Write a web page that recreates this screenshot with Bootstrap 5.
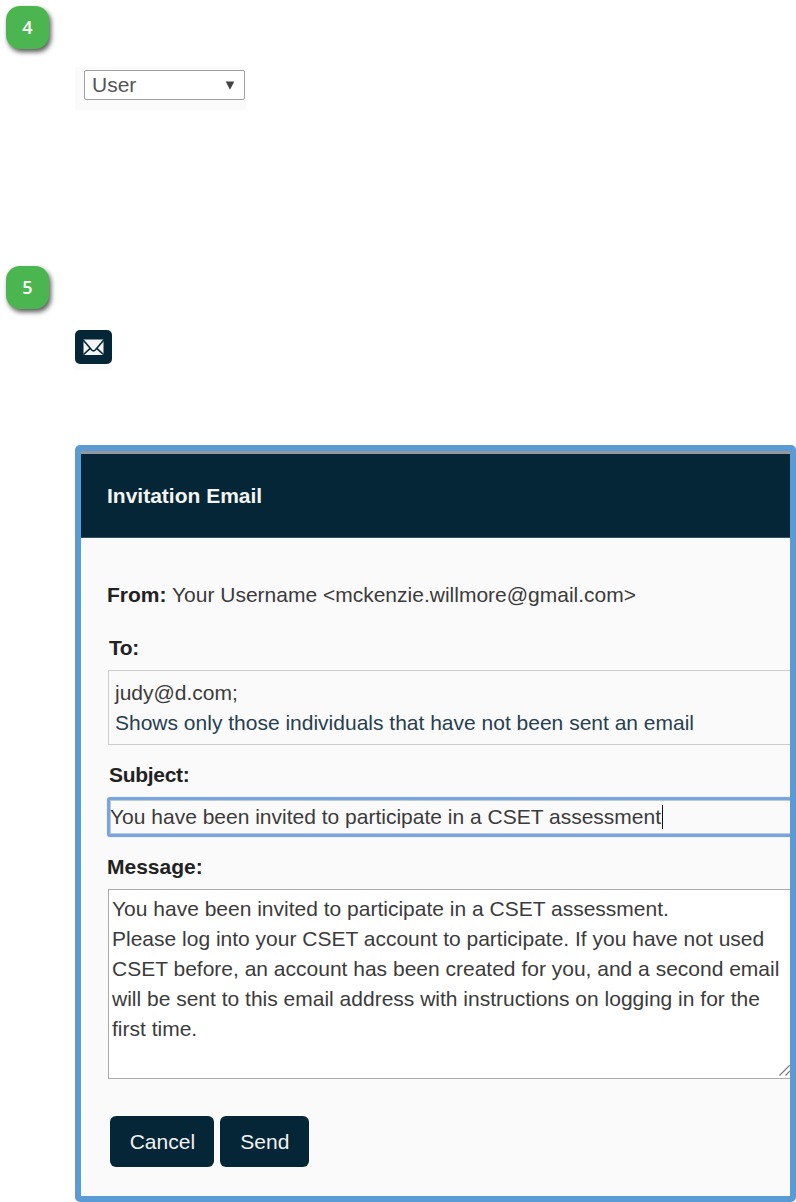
<!DOCTYPE html>
<html lang="en">
<head>
<meta charset="utf-8">
<meta name="viewport" content="width=device-width, initial-scale=1">
<title>Invitation Email</title>
<link href="https://cdn.jsdelivr.net/npm/bootstrap@5.3.0/dist/css/bootstrap.min.css" rel="stylesheet">
<style>
body{font-family:"Liberation Sans",Arial,sans-serif;font-size:21px;line-height:30px;color:#3b3b3b;background:#fff;height:1202px;overflow:hidden}
.step{width:43px;height:43px;margin-left:6px;border-radius:14px;background:#4bb64f;color:#fff;font:600 18px/43px "Open Sans",sans-serif;box-shadow:2px 3px 5px rgba(0,0,0,.65)}
.indent{margin-left:75px}
.role-wrap{width:171px;height:43px;margin-top:18px;padding:3px 1px 0 9px;background:#fafafa}
.role{height:30px;border:1px solid #a0a0a0;border-radius:2px;background:#fff;padding:0 9px 0 7px;color:#555}
.mail-wrap{width:37px;height:40px;margin-top:21px;background:#fafafa}
.mail{width:37px;height:34px;background:#052636;border:0;border-radius:5px}
.panel{width:721px;height:757px;margin-top:75px;border:6px solid #5b9bd5;border-radius:5px;background:#fafafa;overflow:hidden}
.panel-head{height:87px;border-top:3px solid #96979a;border-bottom:1px solid #375160;background:#052636;color:#f4f4f4;padding:27px 0 0 26px}
.panel-main{padding:42px 0 0 26px}
b{color:#222}
.to-box{height:75px;margin:7px 0 15px 1px;border:1px solid #ccc;border-right:0;padding:7px 6px}
.subject-box{height:40px;margin:7px -4px 15px 0;border:3px solid #78a5df;border-radius:3px;box-shadow:inset 0 0 0 1px #bccbd0,0 0 1px #9bc0ff;padding:2px 0 0 0}
.caret{width:1px;height:24px;background:#111;margin:3px 0 0 1px}
.message-box{height:190px;margin:7px 0 0 1px;border:1px solid #aaa;border-right:0;background:#fff;padding:4px 3px;position:relative}
.grip{position:absolute;right:0;bottom:2px}
.line{display:block;white-space:nowrap}
.act{height:51px;background:#052636;color:#f2f2f2;border:0;border-radius:6px;font-size:21px;line-height:30px;padding:0}
.act:hover{background:#0b3950;color:#fff}
</style>
</head>
<body>
<div style="height:6px"></div>
<div class="step text-center">4</div>
<div class="indent role-wrap"><div class="role d-flex align-items-center justify-content-between"><span>User</span><svg width="10" height="9" viewBox="0 0 10 9"><path d="M.7.500h8.600L5 8.800z" fill="#444"/></svg></div></div>
<div style="height:156px"></div>
<div class="step text-center">5</div>
<div class="indent mail-wrap"><button class="mail d-flex align-items-center justify-content-center p-0" aria-label="Send email"><svg width="21" height="17" viewBox="0 0 21 17"><path d="M.5.500h20v15.500H.5z" fill="#f5f5f5"/><path d="M0 .8l8.700 10.200q1.800 1.600 3.600 0L21 .8M.3 15.700l7.200-6.500M20.700 15.700l-7.200-6.500" fill="none" stroke="#052636" stroke-width="1.600"/></svg></button></div>
<section class="indent panel">
  <header class="panel-head fw-bold">Invitation Email</header>
  <div class="panel-main">
    <div class="text-nowrap"><b>From:</b> <span>Your Username &lt;mckenzie.willmore@gmail.com&gt;</span></div>
    <div style="height:23px"></div>
    <b class="line" style="padding-left:2px;letter-spacing:-.4px">To:</b>
    <div class="to-box"><span class="line">judy@d.com;</span><span class="line" style="color:#263f50">Shows only those individuals that have not been sent an email</span></div>
    <b class="line" style="padding-left:2px;letter-spacing:-.3px">Subject:</b>
    <div class="subject-box d-flex"><span class="text-nowrap">You have been invited to participate in a CSET assessment</span><i class="caret"></i></div>
    <b class="line">Message:</b>
    <div class="message-box"><span class="line">You have been invited to participate in a CSET assessment.</span><span class="line">Please log into your CSET account to participate. If you have not used</span><span class="line">CSET before, an account has been created for you, and a second email</span><span class="line">will be sent to this email address with instructions on logging in for the</span><span class="line">first time.</span>
      <svg class="grip" width="11" height="11" viewBox="0 0 11 11"><path d="M.5 10.500L11 0M6.500 10.500L11 6" stroke="#777" stroke-width="1.200"/></svg>
    </div>
    <div class="d-flex" style="padding:37px 0 0 3.400px;gap:6px"><button class="btn act" style="width:104px">Cancel</button><button class="btn act" style="width:89px">Send</button></div>
  </div>
</section>
<script src="https://cdn.jsdelivr.net/npm/bootstrap@5.3.0/dist/js/bootstrap.bundle.min.js"></script>
</body>
</html>
